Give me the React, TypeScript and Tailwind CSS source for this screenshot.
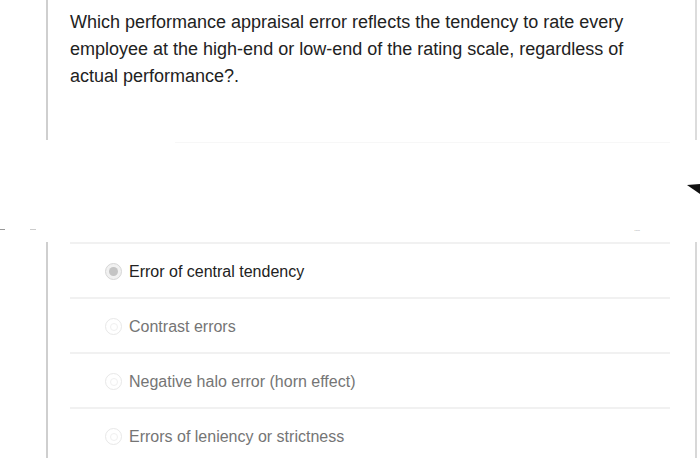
import React from 'react';

const options = [
  { label: 'Error of central tendency', selected: true },
  { label: 'Contrast errors', selected: false },
  { label: 'Negative halo error (horn effect)', selected: false },
  { label: 'Errors of leniency or strictness', selected: false },
];

const Radio: React.FC<{ selected: boolean }> = ({ selected }) => (
  <span
    className={`flex items-center justify-center w-[17px] h-[17px] rounded-full border ${
      selected ? 'border-[#d6d6d6] bg-[#f1f1f1]' : 'border-[#e8e8e8] bg-white'
    }`}
  >
    {selected ? (
      <span className="w-[9px] h-[9px] rounded-full bg-[#c4c4c4]" />
    ) : (
      <span className="w-[8px] h-[8px] rounded-full border border-[#f0f0f0]" />
    )}
  </span>
);

export default function App() {
  return (
    <div
      className="relative w-[700px] h-[458px] bg-white overflow-hidden"
      style={{ fontFamily: '"Liberation Sans", Arial, sans-serif' }}
    >
      {/* question card */}
      <div className="ml-[46px] w-[651px] h-[140px] border-l-2 border-r-2 border-l-[#cfcfcf] border-r-[#dcdcdc] pl-[22px] pt-[9px]">
        <p className="text-[18px] leading-[27px] text-[#222] w-[575px]">
          Which performance appraisal error reflects the tendency to rate every employee at the
          high-end or low-end of the rating scale, regardless of actual performance?.
        </p>
      </div>

      {/* gap between cards */}
      <div className="relative h-[102px] flex flex-col justify-between">
        <div className="ml-[175px] w-[495px] h-px bg-[#f7f7f7] mt-[2px]" />
        <div className="flex items-center justify-between pr-[60px] mb-[10px]">
          <div className="flex gap-[25px]">
            <span className="w-[5px] h-px bg-[#999]" />
            <span className="w-[6px] h-px bg-[#ccc]" />
          </div>
          <span className="text-[5px] leading-[5px] text-[#777] tracking-tighter">.....</span>
        </div>
        <svg className="absolute right-0 top-[44px]" width="13" height="10" viewBox="0 0 13 10">
          <path d="M0 1 L13 0 L13 10 Z" fill="#111" />
        </svg>
      </div>

      {/* options card */}
      <div className="ml-[46px] w-[651px] h-[216px] border-l-2 border-r-2 border-l-[#cfcfcf] border-r-[#d8d8d8] pl-[22px] pr-[25px]">
        {options.map((o) => (
          <div
            key={o.label}
            className="flex items-center h-[55px] border-t-2 border-[#f1f1f1] pl-[35px] pt-[2px] gap-[7px]"
          >
            <Radio selected={o.selected} />
            <span className={`text-[16px] ${o.selected ? 'text-[#222]' : 'text-[#757575]'}`}>
              {o.label}
            </span>
          </div>
        ))}
      </div>
    </div>
  );
}
